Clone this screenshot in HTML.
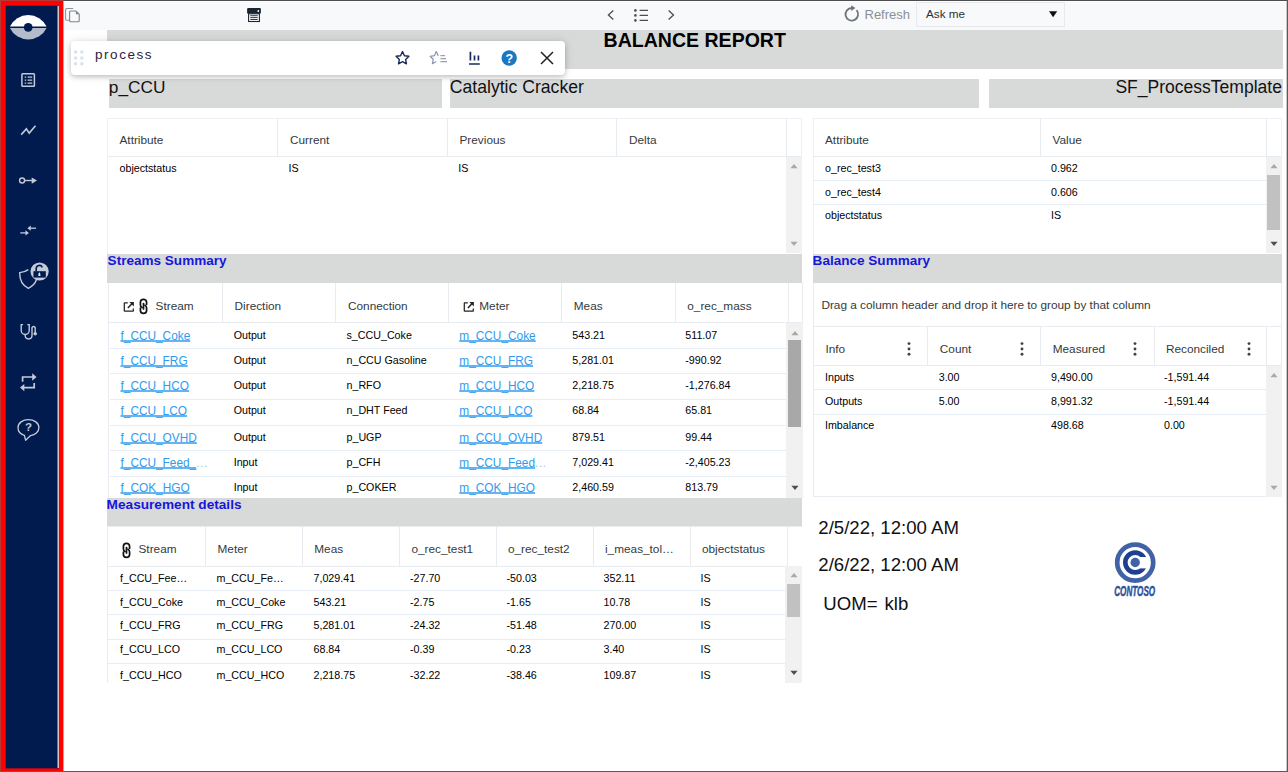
<!DOCTYPE html>
<html lang="en"><head><meta charset="utf-8"><title>Balance Report</title>
<style>
html,body{margin:0;padding:0;}
body{width:1288px;height:772px;overflow:hidden;background:#fff;position:relative;font-family:"Liberation Sans",sans-serif;}
div{position:absolute;white-space:nowrap;box-sizing:border-box;}
svg{position:absolute;overflow:visible;}
.lk{text-decoration:underline;text-decoration-thickness:2px;text-underline-offset:0.4px;text-decoration-color:#64b3f2;text-decoration-skip-ink:none;}
.hl{background:#e9ecef;}
.vl{background:#e9ecef;}
</style></head><body>
<div style="left:63px;top:1px;width:1224px;height:1.3px;background:#fff;"></div>
<div style="left:63px;top:2.3px;width:1224px;height:27.4px;background:#f8f9fa;"></div>
<div style="left:107px;top:30px;width:1176px;height:39px;background:#d8dad9;"></div>
<div style="left:109px;top:79px;width:333px;height:29px;background:#d8dad9;"></div>
<div style="left:450px;top:79px;width:529px;height:29px;background:#d8dad9;"></div>
<div style="left:989px;top:79px;width:294px;height:29px;background:#d8dad9;"></div>
<div style="left:107px;top:254px;width:695px;height:29px;background:#d8dad9;"></div>
<div style="left:813px;top:254px;width:469px;height:29px;background:#d8dad9;"></div>
<div style="left:107px;top:498px;width:695px;height:28px;background:#d8dad9;"></div>
<div style="left:107px;top:526px;width:695px;height:1px;background:#ebeceb;"></div>
<div style="left:603.6px;top:30.75px;font-size:19.55px;line-height:19.55px;color:#000;font-weight:bold;">BALANCE REPORT</div>
<div style="left:108.8px;top:78.76px;font-size:17.3px;line-height:17.3px;color:#111;">p_CCU</div>
<div style="left:449.8px;top:79.28px;font-size:17.62px;line-height:17.62px;color:#111;">Catalytic Cracker</div>
<div style="left:0px;top:79.34px;font-size:17.55px;line-height:17.55px;color:#111;left:auto;right:6px;">SF_ProcessTemplate</div>
<div style="left:107.6px;top:254.13px;font-size:13.55px;line-height:13.55px;color:#1616dc;font-weight:bold;">Streams Summary</div>
<div style="left:812.6px;top:254.13px;font-size:13.55px;line-height:13.55px;color:#1616dc;font-weight:bold;">Balance Summary</div>
<div style="left:106.6px;top:498.15px;font-size:13.65px;line-height:13.65px;color:#1616dc;font-weight:bold;">Measurement details</div>
<div style="left:0px;top:0px;width:64px;height:772px;background:#fe0000;"></div>
<div style="left:63px;top:1px;width:1px;height:770px;background:#ff8f8f;"></div>
<div style="left:0px;top:0px;width:1px;height:772px;background:#b23a3a;"></div>
<div style="left:0px;top:0px;width:64px;height:1px;background:#b23a3a;"></div>
<div style="left:0px;top:771px;width:64px;height:1px;background:#b23a3a;"></div>
<div style="left:6px;top:6px;width:51px;height:762.4px;background:#011b4f;"></div>
<div style="left:5px;top:5px;width:1px;height:764px;background:#bf0714;"></div>
<div style="left:5px;top:5px;width:54px;height:1px;background:#bf0714;"></div>
<div style="left:6px;top:768px;width:53px;height:1px;background:#990b20;"></div>
<div style="left:57px;top:6px;width:1px;height:762.4px;background:#6d7488;"></div>
<div style="left:58px;top:6px;width:1px;height:762.4px;background:#d9c4c4;"></div>
<div style="left:64px;top:0px;width:1224px;height:1px;background:#4d4d4d;"></div>
<div style="left:64px;top:771px;width:1224px;height:1px;background:#5a5a5a;"></div>
<div style="left:1287px;top:0px;width:1px;height:772px;background:#5a5a5a;"></div>
<div style="left:1286px;top:1px;width:1px;height:770px;background:#c9c9c9;"></div>
<svg style="left:0;top:0" width="64" height="50" viewBox="0 0 64 50">
<path d="M9.9 26.6 A20.3 20.3 0 0 1 46.6 26.6 Z" fill="#fff"/>
<path d="M9.9 27.9 A20.3 20.3 0 0 0 46.6 27.9 Z" fill="#b3bbcc"/>
<circle cx="28.2" cy="27.3" r="4.4" fill="#011b4f"/>
</svg>
<svg style="left:0;top:60px" width="64" height="48" viewBox="0 60 64 48" fill="none" stroke="#c3cad8">
<rect x="21.9" y="73.8" width="12.5" height="12.5" rx="0.8" stroke-width="1.5"/>
<g stroke-width="1.4"><path d="M24.7 77.1h1.5M27.6 77.1h4.6M24.7 80.1h1.5M27.6 80.1h4.6M24.7 83.1h1.5M27.6 83.1h4.6"/></g>
</svg>
<svg style="left:0;top:108px" width="64" height="48" viewBox="0 108 64 48" fill="none" stroke="#c3cad8" stroke-width="1.6">
<path d="M21.2 134.6 L26.4 128.9 L29.2 133.1 L35.5 125.8"/></svg>
<svg style="left:0;top:156px" width="64" height="48" viewBox="0 156 64 48" fill="none" stroke="#c3cad8" stroke-width="1.4">
<circle cx="22.1" cy="180.5" r="2.5"/><path d="M25 180.5h7"/><path d="M31.7 177.4L37 180.5L31.7 183.7Z" fill="#c3cad8" stroke="none"/></svg>
<svg style="left:0;top:204px" width="64" height="48" viewBox="0 204 64 48" fill="#c3cad8" stroke="#c3cad8" stroke-width="1.3">
<path d="M30.5 228.2H36" fill="none"/><path d="M27.4 228.2L30.8 225.6V230.8Z" stroke="none"/>
<path d="M20.3 232.9H26" fill="none"/><path d="M28.9 232.9L25.5 230.3V235.5Z" stroke="none"/></svg>
<svg style="left:0;top:250px" width="64" height="48" viewBox="0 250 64 48" fill="none" stroke="#c3cad8" stroke-width="1.4">
<path d="M28.3 269.6 C25.5 271.6 22.5 272.4 19.7 272.6 C19.5 280.5 22.5 285.5 28.3 288.3 C32.5 286.3 35.3 283.2 36.5 279.5"/>
<circle cx="39.6" cy="271.5" r="9.1" fill="#c3cad8" stroke="none"/>
<rect x="33.4" y="271.2" width="12.4" height="6.4" fill="#011b4f" stroke="none"/>
<path d="M36.2 271.4 V268.6 A3.2 3.2 0 0 1 42.3 267.3" stroke="#011b4f" stroke-width="1.6"/>
<path d="M39.2 272.6 a1 1 0 0 1 1 1 l0.3 2.3 h-2.2 l0.3 -2.3 a1 1 0 0 1 0.6 -1z" fill="#e8ebf1" stroke="none"/>
</svg>
<svg style="left:0;top:304px" width="64" height="48" viewBox="0 304 64 48" fill="none" stroke="#c3cad8" stroke-width="1.4" stroke-linecap="round">
<path d="M22.6 324.6 H21.2 V330.5 A4 4 0 0 0 29.2 330.5 V324.6 H27.8"/>
<path d="M25.2 334.6 V335.6 A3.4 3.4 0 0 0 32 335.6 V327.6 A1.7 1.7 0 0 1 35.2 327.6 V332.3"/>
<circle cx="35.2" cy="333.8" r="1.1" fill="#c3cad8"/></svg>
<svg style="left:0;top:358px" width="64" height="48" viewBox="0 358 64 48" fill="none" stroke="#c3cad8" stroke-width="1.7">
<path d="M22.6 381.8 V377 H33.5"/><path d="M36.5 377 L32.2 373.3 V380.7Z" fill="#c3cad8" stroke="none"/>
<path d="M34.2 383 V387.6 H23.2"/><path d="M20 387.6 L24.3 383.9 V391.3Z" fill="#c3cad8" stroke="none"/></svg>
<svg style="left:0;top:406px" width="64" height="48" viewBox="0 406 64 48" fill="none" stroke="#c3cad8" stroke-width="1.3">
<path d="M24.4 435.3 C20.3 434 18 431 18 427.7 C18 423 22.7 419.6 28.4 419.6 C34.2 419.6 38.9 423 38.9 427.7 C38.9 432 35 435 30.6 435.6 L25.6 440.2 Z" stroke-linejoin="round"/>
<text x="28.4" y="430.8" font-family="Liberation Sans, sans-serif" font-size="11.5" font-weight="bold" text-anchor="middle" fill="#c3cad8" stroke="none">?</text></svg>
<div style="left:70.5px;top:41px;width:494.3px;height:33.8px;background:#fff;border-radius:4px;box-shadow:0 2px 5px rgba(0,0,0,.20),0 0 11px rgba(0,0,0,.10);"></div>
<svg style="left:70px;top:41px" width="20" height="34" viewBox="70 41 20 34" fill="#dbe3ea">
<circle cx="75.6" cy="52.1" r="1.8"/><circle cx="81.8" cy="52.1" r="1.8"/>
<circle cx="75.6" cy="58.0" r="1.8"/><circle cx="81.8" cy="58.0" r="1.8"/>
<circle cx="75.6" cy="63.8" r="1.8"/><circle cx="81.8" cy="63.8" r="1.8"/></svg>
<div style="left:95px;top:47.77px;font-size:13.5px;line-height:13.5px;color:#2b2540;letter-spacing:1.55px;">process</div>
<svg style="left:390px;top:41px" width="175" height="34" viewBox="390 41 175 34" fill="none">
<path d="M402.5 51.6 l1.95 4.1 4.45 .6 -3.25 3.1 .8 4.45 -3.95 -2.15 -3.95 2.15 .8 -4.45 -3.25 -3.1 4.45 -.6z" stroke="#1b2a5c" stroke-width="1.4" stroke-linejoin="round"/>
<path d="M436.3 51.6 l1.8 3.9 -.0 .0 M436.3 51.6 l-1.9 4.1 -4.3 .6 3.1 3 -.8 4.4 3.4 -1.9" stroke="#8b95ad" stroke-width="1.2" stroke-linejoin="round" stroke-linecap="round"/>
<path d="M440.4 55.6h4.6M440.4 58.6h5.6M440.4 61.6h6.6" stroke="#98a1b6" stroke-width="1.1"/>
<path d="M470.4 51.8v8.6M474.5 55.4v5M478.4 55.4v5" stroke="#1b2a5c" stroke-width="1.7"/>
<path d="M469 64h10.8" stroke="#1b2a5c" stroke-width="1.5"/>
<circle cx="509.2" cy="58" r="7.7" fill="#1a78c2"/>
<text x="509.2" y="62.5" font-family="Liberation Sans, sans-serif" font-size="12.5" font-weight="bold" text-anchor="middle" fill="#fff">?</text>
<path d="M541 52l12 12M553 52l-12 12" stroke="#222" stroke-width="1.5"/>
</svg>
<svg style="left:64px;top:2px" width="1222" height="28" viewBox="64 2 1222 28" fill="none">
<path d="M69 20.2 h-2.2 a1.2 1.2 0 0 1 -1.2 -1.2 v-9.4 a1.2 1.2 0 0 1 1.2 -1.2 h6.4" stroke="#8b939b" stroke-width="1.05"/>
<path d="M70.6 11 h5.3 l3.3 3.2 v6.6 a1 1 0 0 1 -1 1 h-7.6 a1 1 0 0 1 -1 -1 v-8.8 a1 1 0 0 1 1 -1z" stroke="#7b838b" stroke-width="1.1" fill="#f8f9fa"/>
<path d="M75.9 11 v3.2 h3.3z" fill="#7b838b"/>
<rect x="247.1" y="8" width="13.8" height="5.8" rx="1" fill="#1c2331"/>
<circle cx="258.3" cy="11" r="0.9" fill="#fff"/>
<rect x="248.6" y="13.8" width="10.8" height="7.7" fill="#fff" stroke="#1c2331" stroke-width="1.1"/>
<path d="M250.3 15.7h7.4M250.3 17.6h7.4M250.3 19.5h7.4" stroke="#1c2331" stroke-width="0.9"/>
<path d="M613.3 10.6 L608.4 15.1 L613.3 19.6" stroke="#4a4f55" stroke-width="1.3"/>
<path d="M668.6 10.6 L673.5 15.1 L668.6 19.6" stroke="#4a4f55" stroke-width="1.3"/>
<circle cx="635.4" cy="10.4" r="1.3" fill="#4a4f55"/><circle cx="635.4" cy="15.4" r="1.3" fill="#4a4f55"/><circle cx="635.4" cy="20.4" r="1.3" fill="#4a4f55"/>
<path d="M639.6 10.4h8.4M639.6 15.4h8.4M639.6 20.4h8.4" stroke="#4a4f55" stroke-width="1.1"/>
<path d="M856.6 10.2 A6.3 6.3 0 1 1 851.9 8" stroke="#6c757d" stroke-width="1.8"/>
<path d="M851.2 5.2 L855.4 8 L851.2 10.9Z" fill="#6c757d"/>
</svg>
<div style="left:864.5px;top:7.8px;font-size:13px;line-height:13px;color:#8a9096;">Refresh</div>
<div style="left:916px;top:1.5px;width:149.2px;height:25.2px;background:#f8f9fa;border:1px solid #e7e9ec;"></div>
<div style="left:926px;top:8.3px;font-size:11.7px;line-height:11.7px;color:#2b3035;">Ask me</div>
<svg style="left:1048px;top:10px" width="10" height="8" viewBox="0 0 10 8"><path d="M1 1.2h8.2L5.1 7.2z" fill="#111"/></svg>
<div style="left:107px;top:117.5px;width:695.3px;height:136.5px;background:#fff;border:1px solid #eef1f4;border-bottom:none;"></div>
<div style="left:107px;top:156.2px;width:695px;height:1px;background:#e8ebef;"></div>
<div style="left:276.6px;top:118px;width:1px;height:38.5px;background:#e8ebef;"></div>
<div style="left:446.6px;top:118px;width:1px;height:38.5px;background:#e8ebef;"></div>
<div style="left:616px;top:118px;width:1px;height:38.5px;background:#e8ebef;"></div>
<div style="left:786px;top:118px;width:1px;height:38.5px;background:#e8ebef;"></div>
<div style="left:119.5px;top:135.11px;font-size:11.8px;line-height:11.8px;color:#333a40;">Attribute</div>
<div style="left:290px;top:135.11px;font-size:11.8px;line-height:11.8px;color:#333a40;">Current</div>
<div style="left:459.5px;top:135.11px;font-size:11.8px;line-height:11.8px;color:#333a40;">Previous</div>
<div style="left:629px;top:135.11px;font-size:11.8px;line-height:11.8px;color:#333a40;">Delta</div>
<div style="left:119.5px;top:163.24px;font-size:10.7px;line-height:10.7px;color:#000;">objectstatus</div>
<div style="left:288.5px;top:163.24px;font-size:10.7px;line-height:10.7px;color:#000;">IS</div>
<div style="left:458.2px;top:163.24px;font-size:10.7px;line-height:10.7px;color:#000;">IS</div>
<div style="left:785.5px;top:157px;width:16.5px;height:96px;background:#f1f1f1;"></div>
<svg style="left:788.6px;top:162.2px" width="10" height="8" viewBox="0 0 10 8"><path d="M1.4 6.2 L5 2 L8.6 6.2z" fill="#a9a9a9"/></svg>
<svg style="left:788.6px;top:240.3px" width="10" height="8" viewBox="0 0 10 8"><path d="M1.4 1.8 L5 6 L8.6 1.8z" fill="#a9a9a9"/></svg>
<div style="left:812.7px;top:117.5px;width:469.6px;height:136.5px;background:#fff;border:1px solid #eef1f4;border-bottom:none;"></div>
<div style="left:813px;top:156.2px;width:469px;height:1px;background:#e8ebef;"></div>
<div style="left:1040.2px;top:118px;width:1px;height:38.5px;background:#e8ebef;"></div>
<div style="left:1266.3px;top:118px;width:1px;height:38.5px;background:#e8ebef;"></div>
<div style="left:825px;top:135.11px;font-size:11.8px;line-height:11.8px;color:#333a40;">Attribute</div>
<div style="left:1052.5px;top:135.11px;font-size:11.8px;line-height:11.8px;color:#333a40;">Value</div>
<div style="left:813.5px;top:180.4px;width:452.5px;height:1px;background:#e6edf4;"></div>
<div style="left:813.5px;top:204px;width:452.5px;height:1px;background:#e6edf4;"></div>
<div style="left:825px;top:163.24px;font-size:10.7px;line-height:10.7px;color:#000;">o_rec_test3</div>
<div style="left:1051px;top:163.24px;font-size:10.7px;line-height:10.7px;color:#000;">0.962</div>
<div style="left:825px;top:187.24px;font-size:10.7px;line-height:10.7px;color:#000;">o_rec_test4</div>
<div style="left:1051px;top:187.24px;font-size:10.7px;line-height:10.7px;color:#000;">0.606</div>
<div style="left:825px;top:210.14px;font-size:10.7px;line-height:10.7px;color:#000;">objectstatus</div>
<div style="left:1051px;top:210.14px;font-size:10.7px;line-height:10.7px;color:#000;">IS</div>
<div style="left:1265.6px;top:157px;width:16.7px;height:96px;background:#f1f1f1;"></div>
<div style="left:1267.2px;top:174.6px;width:12.8px;height:55.4px;background:#c1c1c1;"></div>
<svg style="left:1268.7px;top:162.2px" width="10" height="8" viewBox="0 0 10 8"><path d="M1.4 6.2 L5 2 L8.6 6.2z" fill="#a9a9a9"/></svg>
<svg style="left:1268.7px;top:240.3px" width="10" height="8" viewBox="0 0 10 8"><path d="M1.4 1.8 L5 6 L8.6 1.8z" fill="#4f4f4f"/></svg>
<div style="left:108px;top:283px;width:695.4px;height:214.75px;background:#fff;border-left:1px solid #e8ebef;border-right:1px solid #e8ebef;"></div>
<div style="left:109px;top:321.8px;width:694px;height:1px;background:#e8ebef;"></div>
<div style="left:222.2px;top:283px;width:1px;height:39px;background:#e8ebef;"></div>
<div style="left:335.4px;top:283px;width:1px;height:39px;background:#e8ebef;"></div>
<div style="left:448.2px;top:283px;width:1px;height:39px;background:#e8ebef;"></div>
<div style="left:561.3px;top:283px;width:1px;height:39px;background:#e8ebef;"></div>
<div style="left:675px;top:283px;width:1px;height:39px;background:#e8ebef;"></div>
<div style="left:787.7px;top:283px;width:1px;height:39px;background:#e8ebef;"></div>
<svg style="left:122.7px;top:300.9px" width="13" height="12" viewBox="0 0 13 12" fill="none" stroke="#212529" stroke-width="1.25"><path d="M4.8 1.9H1.7a.4.4 0 0 0-.4.4v7.4a.4.4 0 0 0 .4.4h8.2a.4.4 0 0 0 .4-.4V7.6"/><path d="M4.9 6.9 L9.6 2.1" stroke-width="1.5"/><path d="M6.3 0.9h4.6v4.6z" fill="#212529" stroke="none"/></svg>
<svg style="left:139.3px;top:298.2px" width="10" height="17" viewBox="0 0 10 17" fill="none" stroke="#111" stroke-width="1.7" stroke-linecap="round"><path d="M7.6 6.2V4.4a3.1 3.1 0 0 0-6.2 0v2.4a3.1 3.1 0 0 0 1.6 2.7"/><path d="M1.4 10.2v2.1a3.1 3.1 0 0 0 6.2 0V9.9a3.1 3.1 0 0 0-1.6-2.7"/><path d="M4.5 5.6v5.4"/></svg>
<div style="left:155.6px;top:300.81px;font-size:11.8px;line-height:11.8px;color:#333a40;">Stream</div>
<div style="left:234.6px;top:300.81px;font-size:11.8px;line-height:11.8px;color:#333a40;">Direction</div>
<div style="left:348px;top:300.81px;font-size:11.8px;line-height:11.8px;color:#333a40;">Connection</div>
<svg style="left:462.6px;top:300.9px" width="13" height="12" viewBox="0 0 13 12" fill="none" stroke="#212529" stroke-width="1.25"><path d="M4.8 1.9H1.7a.4.4 0 0 0-.4.4v7.4a.4.4 0 0 0 .4.4h8.2a.4.4 0 0 0 .4-.4V7.6"/><path d="M4.9 6.9 L9.6 2.1" stroke-width="1.5"/><path d="M6.3 0.9h4.6v4.6z" fill="#212529" stroke="none"/></svg>
<div style="left:479.3px;top:300.81px;font-size:11.8px;line-height:11.8px;color:#333a40;">Meter</div>
<div style="left:573.8px;top:300.81px;font-size:11.8px;line-height:11.8px;color:#333a40;">Meas</div>
<div style="left:687.3px;top:300.81px;font-size:11.8px;line-height:11.8px;color:#333a40;">o_rec_mass</div>
<div class="lk" style="left:120.5px;top:331.27px;font-size:11.85px;line-height:11.85px;color:#2f9bee;">f_CCU_Coke</div>
<div style="left:233.7px;top:329.74px;font-size:10.7px;line-height:10.7px;color:#000;">Output</div>
<div style="left:346.5px;top:329.74px;font-size:10.7px;line-height:10.7px;color:#000;">s_CCU_Coke</div>
<div class="lk" style="left:459.3px;top:331.27px;font-size:11.85px;line-height:11.85px;color:#2f9bee;">m_CCU_Coke</div>
<div style="left:572.3px;top:329.74px;font-size:10.7px;line-height:10.7px;color:#000;">543.21</div>
<div style="left:685.3px;top:329.74px;font-size:10.7px;line-height:10.7px;color:#000;">511.07</div>
<div class="lk" style="left:120.5px;top:356.07px;font-size:11.85px;line-height:11.85px;color:#2f9bee;">f_CCU_FRG</div>
<div style="left:233.7px;top:354.54px;font-size:10.7px;line-height:10.7px;color:#000;">Output</div>
<div style="left:346.5px;top:354.54px;font-size:10.7px;line-height:10.7px;color:#000;">n_CCU Gasoline</div>
<div class="lk" style="left:459.3px;top:356.07px;font-size:11.85px;line-height:11.85px;color:#2f9bee;">m_CCU_FRG</div>
<div style="left:572.3px;top:354.54px;font-size:10.7px;line-height:10.7px;color:#000;">5,281.01</div>
<div style="left:685.3px;top:354.54px;font-size:10.7px;line-height:10.7px;color:#000;">-990.92</div>
<div class="lk" style="left:120.5px;top:381.17px;font-size:11.85px;line-height:11.85px;color:#2f9bee;">f_CCU_HCO</div>
<div style="left:233.7px;top:379.64px;font-size:10.7px;line-height:10.7px;color:#000;">Output</div>
<div style="left:346.5px;top:379.64px;font-size:10.7px;line-height:10.7px;color:#000;">n_RFO</div>
<div class="lk" style="left:459.3px;top:381.17px;font-size:11.85px;line-height:11.85px;color:#2f9bee;">m_CCU_HCO</div>
<div style="left:572.3px;top:379.64px;font-size:10.7px;line-height:10.7px;color:#000;">2,218.75</div>
<div style="left:685.3px;top:379.64px;font-size:10.7px;line-height:10.7px;color:#000;">-1,276.84</div>
<div class="lk" style="left:120.5px;top:406.17px;font-size:11.85px;line-height:11.85px;color:#2f9bee;">f_CCU_LCO</div>
<div style="left:233.7px;top:404.64px;font-size:10.7px;line-height:10.7px;color:#000;">Output</div>
<div style="left:346.5px;top:404.64px;font-size:10.7px;line-height:10.7px;color:#000;">n_DHT Feed</div>
<div class="lk" style="left:459.3px;top:406.17px;font-size:11.85px;line-height:11.85px;color:#2f9bee;">m_CCU_LCO</div>
<div style="left:572.3px;top:404.64px;font-size:10.7px;line-height:10.7px;color:#000;">68.84</div>
<div style="left:685.3px;top:404.64px;font-size:10.7px;line-height:10.7px;color:#000;">65.81</div>
<div class="lk" style="left:120.5px;top:433.17px;font-size:11.85px;line-height:11.85px;color:#2f9bee;">f_CCU_OVHD</div>
<div style="left:233.7px;top:431.64px;font-size:10.7px;line-height:10.7px;color:#000;">Output</div>
<div style="left:346.5px;top:431.64px;font-size:10.7px;line-height:10.7px;color:#000;">p_UGP</div>
<div class="lk" style="left:459.3px;top:433.17px;font-size:11.85px;line-height:11.85px;color:#2f9bee;">m_CCU_OVHD</div>
<div style="left:572.3px;top:431.64px;font-size:10.7px;line-height:10.7px;color:#000;">879.51</div>
<div style="left:685.3px;top:431.64px;font-size:10.7px;line-height:10.7px;color:#000;">99.44</div>
<div style="left:120.5px;top:458.17px;font-size:11.85px;line-height:11.85px;color:#2f9bee;"><span class="lk">f_CCU_Feed_</span><span style="color:#9cc9f3;letter-spacing:0.6px">...</span></div>
<div style="left:233.7px;top:456.64px;font-size:10.7px;line-height:10.7px;color:#000;">Input</div>
<div style="left:346.5px;top:456.64px;font-size:10.7px;line-height:10.7px;color:#000;">p_CFH</div>
<div style="left:459.3px;top:458.17px;font-size:11.85px;line-height:11.85px;color:#2f9bee;"><span class="lk">m_CCU_Feed</span><span style="color:#9cc9f3;letter-spacing:0.6px">...</span></div>
<div style="left:572.3px;top:456.64px;font-size:10.7px;line-height:10.7px;color:#000;">7,029.41</div>
<div style="left:685.3px;top:456.64px;font-size:10.7px;line-height:10.7px;color:#000;">-2,405.23</div>
<div class="lk" style="left:120.5px;top:483.17px;font-size:11.85px;line-height:11.85px;color:#2f9bee;">f_COK_HGO</div>
<div style="left:233.7px;top:481.64px;font-size:10.7px;line-height:10.7px;color:#000;">Input</div>
<div style="left:346.5px;top:481.64px;font-size:10.7px;line-height:10.7px;color:#000;">p_COKER</div>
<div class="lk" style="left:459.3px;top:483.17px;font-size:11.85px;line-height:11.85px;color:#2f9bee;">m_COK_HGO</div>
<div style="left:572.3px;top:481.64px;font-size:10.7px;line-height:10.7px;color:#000;">2,460.59</div>
<div style="left:685.3px;top:481.64px;font-size:10.7px;line-height:10.7px;color:#000;">813.79</div>
<div style="left:109.5px;top:347.8px;width:677px;height:1px;background:#e6edf4;"></div>
<div style="left:109.5px;top:373.1px;width:677px;height:1px;background:#e6edf4;"></div>
<div style="left:109.5px;top:398.6px;width:677px;height:1px;background:#e6edf4;"></div>
<div style="left:109.5px;top:424.6px;width:677px;height:1px;background:#e6edf4;"></div>
<div style="left:109.5px;top:450.4px;width:677px;height:1px;background:#e6edf4;"></div>
<div style="left:109.5px;top:475.6px;width:677px;height:1px;background:#e6edf4;"></div>
<div style="left:786.3px;top:322.6px;width:17px;height:175.1px;background:#f1f1f1;"></div>
<div style="left:788.2px;top:340.1px;width:12.7px;height:86.5px;background:#a8a8a8;"></div>
<svg style="left:789.6px;top:328.5px" width="10" height="8" viewBox="0 0 10 8"><path d="M1.4 6.2 L5 2 L8.6 6.2z" fill="#a9a9a9"/></svg>
<svg style="left:789.6px;top:484px" width="10" height="8" viewBox="0 0 10 8"><path d="M1.4 1.8 L5 6 L8.6 1.8z" fill="#4f4f4f"/></svg>
<div style="left:812.7px;top:283px;width:469.6px;height:213.8px;background:#fff;border:1px solid #e8ebef;border-top:none;"></div>
<div style="left:813px;top:326.2px;width:469px;height:1px;background:#e8ebef;"></div>
<div style="left:813px;top:364.8px;width:469px;height:1px;background:#e8ebef;"></div>
<div style="left:927.3px;top:327px;width:1px;height:38px;background:#e8ebef;"></div>
<div style="left:1040.2px;top:327px;width:1px;height:38px;background:#e8ebef;"></div>
<div style="left:1154px;top:327px;width:1px;height:38px;background:#e8ebef;"></div>
<div style="left:1266.3px;top:327px;width:1px;height:38px;background:#e8ebef;"></div>
<div style="left:821.4px;top:300.21px;font-size:11.8px;line-height:11.8px;color:#333a40;">Drag a column header and drop it here to group by that column</div>
<div style="left:825.4px;top:343.71px;font-size:11.8px;line-height:11.8px;color:#333a40;">Info</div>
<svg style="left:906.4px;top:340.8px" width="6" height="16" viewBox="0 0 6 16" fill="#424242"><circle cx="3" cy="2.6" r="1.45"/><circle cx="3" cy="8" r="1.45"/><circle cx="3" cy="13.3" r="1.45"/></svg>
<div style="left:939.8px;top:343.71px;font-size:11.8px;line-height:11.8px;color:#333a40;">Count</div>
<svg style="left:1019.2px;top:340.8px" width="6" height="16" viewBox="0 0 6 16" fill="#424242"><circle cx="3" cy="2.6" r="1.45"/><circle cx="3" cy="8" r="1.45"/><circle cx="3" cy="13.3" r="1.45"/></svg>
<div style="left:1052.7px;top:343.71px;font-size:11.8px;line-height:11.8px;color:#333a40;">Measured</div>
<svg style="left:1132.4px;top:340.8px" width="6" height="16" viewBox="0 0 6 16" fill="#424242"><circle cx="3" cy="2.6" r="1.45"/><circle cx="3" cy="8" r="1.45"/><circle cx="3" cy="13.3" r="1.45"/></svg>
<div style="left:1166px;top:343.71px;font-size:11.8px;line-height:11.8px;color:#333a40;">Reconciled</div>
<svg style="left:1245.6px;top:340.8px" width="6" height="16" viewBox="0 0 6 16" fill="#424242"><circle cx="3" cy="2.6" r="1.45"/><circle cx="3" cy="8" r="1.45"/><circle cx="3" cy="13.3" r="1.45"/></svg>
<div style="left:813.5px;top:389.4px;width:452.5px;height:1px;background:#e6edf4;"></div>
<div style="left:813.5px;top:413.9px;width:452.5px;height:1px;background:#e6edf4;"></div>
<div style="left:825px;top:372.14px;font-size:10.7px;line-height:10.7px;color:#000;">Inputs</div>
<div style="left:938.7px;top:372.14px;font-size:10.7px;line-height:10.7px;color:#000;">3.00</div>
<div style="left:1051px;top:372.14px;font-size:10.7px;line-height:10.7px;color:#000;">9,490.00</div>
<div style="left:1164px;top:372.14px;font-size:10.7px;line-height:10.7px;color:#000;">-1,591.44</div>
<div style="left:825px;top:396.14px;font-size:10.7px;line-height:10.7px;color:#000;">Outputs</div>
<div style="left:938.7px;top:396.14px;font-size:10.7px;line-height:10.7px;color:#000;">5.00</div>
<div style="left:1051px;top:396.14px;font-size:10.7px;line-height:10.7px;color:#000;">8,991.32</div>
<div style="left:1164px;top:396.14px;font-size:10.7px;line-height:10.7px;color:#000;">-1,591.44</div>
<div style="left:825px;top:420.24px;font-size:10.7px;line-height:10.7px;color:#000;">Imbalance</div>
<div style="left:938.7px;top:420.24px;font-size:10.7px;line-height:10.7px;color:#000;"></div>
<div style="left:1051px;top:420.24px;font-size:10.7px;line-height:10.7px;color:#000;">498.68</div>
<div style="left:1164px;top:420.24px;font-size:10.7px;line-height:10.7px;color:#000;">0.00</div>
<div style="left:1265.6px;top:365.5px;width:16.7px;height:131px;background:#f1f1f1;"></div>
<svg style="left:1268.7px;top:371px" width="10" height="8" viewBox="0 0 10 8"><path d="M1.4 6.2 L5 2 L8.6 6.2z" fill="#a9a9a9"/></svg>
<svg style="left:1268.7px;top:484px" width="10" height="8" viewBox="0 0 10 8"><path d="M1.4 1.8 L5 6 L8.6 1.8z" fill="#a9a9a9"/></svg>
<div style="left:107px;top:526.5px;width:695.5px;height:156px;background:#fff;border-left:1px solid #e8ebef;"></div>
<div style="left:108px;top:565.6px;width:694px;height:1px;background:#e8ebef;"></div>
<div style="left:205px;top:526.5px;width:1px;height:39px;background:#e8ebef;"></div>
<div style="left:302px;top:526.5px;width:1px;height:39px;background:#e8ebef;"></div>
<div style="left:399px;top:526.5px;width:1px;height:39px;background:#e8ebef;"></div>
<div style="left:495.5px;top:526.5px;width:1px;height:39px;background:#e8ebef;"></div>
<div style="left:592.5px;top:526.5px;width:1px;height:39px;background:#e8ebef;"></div>
<div style="left:689.5px;top:526.5px;width:1px;height:39px;background:#e8ebef;"></div>
<div style="left:786.5px;top:526.5px;width:1px;height:39px;background:#e8ebef;"></div>
<svg style="left:122.3px;top:541.8px" width="10" height="17" viewBox="0 0 10 17" fill="none" stroke="#111" stroke-width="1.7" stroke-linecap="round"><path d="M7.6 6.2V4.4a3.1 3.1 0 0 0-6.2 0v2.4a3.1 3.1 0 0 0 1.6 2.7"/><path d="M1.4 10.2v2.1a3.1 3.1 0 0 0 6.2 0V9.9a3.1 3.1 0 0 0-1.6-2.7"/><path d="M4.5 5.6v5.4"/></svg>
<div style="left:138.5px;top:543.81px;font-size:11.8px;line-height:11.8px;color:#333a40;">Stream</div>
<div style="left:217.5px;top:543.81px;font-size:11.8px;line-height:11.8px;color:#333a40;">Meter</div>
<div style="left:314.3px;top:543.81px;font-size:11.8px;line-height:11.8px;color:#333a40;">Meas</div>
<div style="left:411.5px;top:543.81px;font-size:11.8px;line-height:11.8px;color:#333a40;">o_rec_test1</div>
<div style="left:508px;top:543.81px;font-size:11.8px;line-height:11.8px;color:#333a40;">o_rec_test2</div>
<div style="left:605px;top:543.81px;font-size:11.8px;line-height:11.8px;color:#333a40;">i_meas_tol…</div>
<div style="left:702px;top:543.81px;font-size:11.8px;line-height:11.8px;color:#333a40;">objectstatus</div>
<div style="left:120px;top:573.24px;font-size:10.7px;line-height:10.7px;color:#000;">f_CCU_Fee…</div>
<div style="left:216.5px;top:573.24px;font-size:10.7px;line-height:10.7px;color:#000;">m_CCU_Fe…</div>
<div style="left:313.5px;top:573.24px;font-size:10.7px;line-height:10.7px;color:#000;">7,029.41</div>
<div style="left:410px;top:573.24px;font-size:10.7px;line-height:10.7px;color:#000;">-27.70</div>
<div style="left:506.5px;top:573.24px;font-size:10.7px;line-height:10.7px;color:#000;">-50.03</div>
<div style="left:603.5px;top:573.24px;font-size:10.7px;line-height:10.7px;color:#000;">352.11</div>
<div style="left:700.5px;top:573.24px;font-size:10.7px;line-height:10.7px;color:#000;">IS</div>
<div style="left:120px;top:596.94px;font-size:10.7px;line-height:10.7px;color:#000;">f_CCU_Coke</div>
<div style="left:216.5px;top:596.94px;font-size:10.7px;line-height:10.7px;color:#000;">m_CCU_Coke</div>
<div style="left:313.5px;top:596.94px;font-size:10.7px;line-height:10.7px;color:#000;">543.21</div>
<div style="left:410px;top:596.94px;font-size:10.7px;line-height:10.7px;color:#000;">-2.75</div>
<div style="left:506.5px;top:596.94px;font-size:10.7px;line-height:10.7px;color:#000;">-1.65</div>
<div style="left:603.5px;top:596.94px;font-size:10.7px;line-height:10.7px;color:#000;">10.78</div>
<div style="left:700.5px;top:596.94px;font-size:10.7px;line-height:10.7px;color:#000;">IS</div>
<div style="left:120px;top:619.94px;font-size:10.7px;line-height:10.7px;color:#000;">f_CCU_FRG</div>
<div style="left:216.5px;top:619.94px;font-size:10.7px;line-height:10.7px;color:#000;">m_CCU_FRG</div>
<div style="left:313.5px;top:619.94px;font-size:10.7px;line-height:10.7px;color:#000;">5,281.01</div>
<div style="left:410px;top:619.94px;font-size:10.7px;line-height:10.7px;color:#000;">-24.32</div>
<div style="left:506.5px;top:619.94px;font-size:10.7px;line-height:10.7px;color:#000;">-51.48</div>
<div style="left:603.5px;top:619.94px;font-size:10.7px;line-height:10.7px;color:#000;">270.00</div>
<div style="left:700.5px;top:619.94px;font-size:10.7px;line-height:10.7px;color:#000;">IS</div>
<div style="left:120px;top:644.14px;font-size:10.7px;line-height:10.7px;color:#000;">f_CCU_LCO</div>
<div style="left:216.5px;top:644.14px;font-size:10.7px;line-height:10.7px;color:#000;">m_CCU_LCO</div>
<div style="left:313.5px;top:644.14px;font-size:10.7px;line-height:10.7px;color:#000;">68.84</div>
<div style="left:410px;top:644.14px;font-size:10.7px;line-height:10.7px;color:#000;">-0.39</div>
<div style="left:506.5px;top:644.14px;font-size:10.7px;line-height:10.7px;color:#000;">-0.23</div>
<div style="left:603.5px;top:644.14px;font-size:10.7px;line-height:10.7px;color:#000;">3.40</div>
<div style="left:700.5px;top:644.14px;font-size:10.7px;line-height:10.7px;color:#000;">IS</div>
<div style="left:120px;top:669.64px;font-size:10.7px;line-height:10.7px;color:#000;">f_CCU_HCO</div>
<div style="left:216.5px;top:669.64px;font-size:10.7px;line-height:10.7px;color:#000;">m_CCU_HCO</div>
<div style="left:313.5px;top:669.64px;font-size:10.7px;line-height:10.7px;color:#000;">2,218.75</div>
<div style="left:410px;top:669.64px;font-size:10.7px;line-height:10.7px;color:#000;">-32.22</div>
<div style="left:506.5px;top:669.64px;font-size:10.7px;line-height:10.7px;color:#000;">-38.46</div>
<div style="left:603.5px;top:669.64px;font-size:10.7px;line-height:10.7px;color:#000;">109.87</div>
<div style="left:700.5px;top:669.64px;font-size:10.7px;line-height:10.7px;color:#000;">IS</div>
<div style="left:108px;top:590.4px;width:678px;height:1px;background:#e6edf4;"></div>
<div style="left:108px;top:614.3px;width:678px;height:1px;background:#e6edf4;"></div>
<div style="left:108px;top:638.8px;width:678px;height:1px;background:#e6edf4;"></div>
<div style="left:108px;top:663.3px;width:678px;height:1px;background:#e6edf4;"></div>
<div style="left:785.3px;top:566px;width:17.2px;height:116.5px;background:#f1f1f1;"></div>
<div style="left:787px;top:583.5px;width:12.6px;height:33px;background:#c1c1c1;"></div>
<svg style="left:788.6px;top:571px" width="10" height="8" viewBox="0 0 10 8"><path d="M1.4 6.2 L5 2 L8.6 6.2z" fill="#a9a9a9"/></svg>
<svg style="left:788.6px;top:669px" width="10" height="8" viewBox="0 0 10 8"><path d="M1.4 1.8 L5 6 L8.6 1.8z" fill="#4f4f4f"/></svg>
<div style="left:100px;top:682.5px;width:710px;height:20px;background:#fff;"></div>
<div style="left:818.3px;top:519.36px;font-size:18.6px;line-height:18.6px;color:#111;">2/5/22, 12:00 AM</div>
<div style="left:818.3px;top:556.36px;font-size:18.6px;line-height:18.6px;color:#111;">2/6/22, 12:00 AM</div>
<div style="left:823.3px;top:594.66px;font-size:18.6px;line-height:18.6px;color:#111;">UOM=</div>
<div style="left:884.5px;top:594.66px;font-size:18.6px;line-height:18.6px;color:#111;">klb</div>
<svg style="left:1105px;top:536px" width="60" height="66" viewBox="1105 536 60 66">
<circle cx="1135.2" cy="562.6" r="18" fill="none" stroke="#4262a8" stroke-width="4.7"/>
<circle cx="1135.2" cy="562.5" r="9.9" fill="none" stroke="#1f3f90" stroke-width="4.6"/>
<rect x="1138.5" y="557" width="10.5" height="11.4" fill="#fff"/>
<circle cx="1135.2" cy="562.5" r="4.7" fill="#4262a8"/>
<text x="1114.2" y="595.8" font-family="Liberation Sans, sans-serif" font-size="13.8" font-weight="bold" font-style="italic" fill="#2d4f9e" stroke="#2d4f9e" stroke-width="0.45" textLength="41" lengthAdjust="spacingAndGlyphs">CONTOSO</text>
</svg>
</body></html>
